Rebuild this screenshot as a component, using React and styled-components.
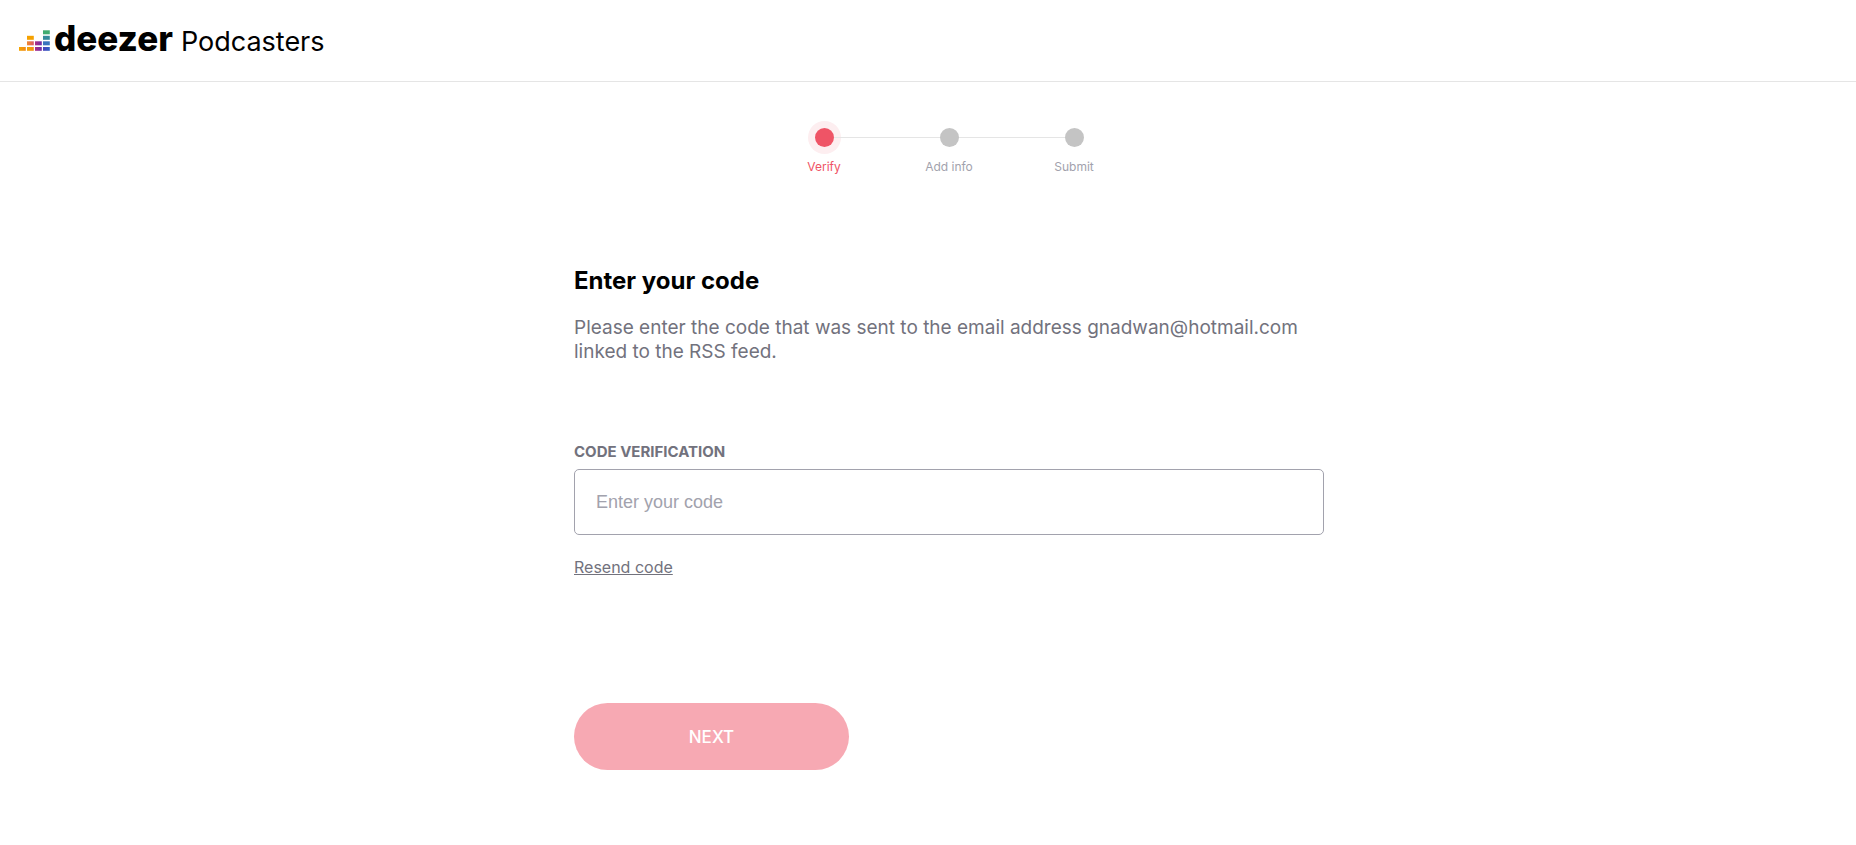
import React from "react";
import styled, { createGlobalStyle } from "styled-components";

const GlobalStyle = createGlobalStyle`
  * {
    box-sizing: border-box;
  }

  body {
    margin: 0;
    background-color: white;
    color: black;
    font-family: "Inter", "Liberation Sans", sans-serif;
  }
`;

const Header = styled.header`
  height: 82px;
  width: 100%;
  padding: 0 19px;
  border-bottom: 1px solid #e5e5e5;
`;

const Brand = styled.a`
  display: inline-flex;
  align-items: baseline;
  padding-top: 16px;
  color: black;
  text-decoration: none;
`;

const Equalizer = styled.svg`
  width: 32px;
  height: 21px;
  margin-right: 3px;
`;

const Wordmark = styled.span`
  font-size: 35px;
  font-weight: 800;
  line-height: 44px;
`;

const Product = styled.span`
  margin-left: 8px;
  font-size: 27px;
  line-height: 44px;
`;

const Main = styled.main`
  display: flex;
  flex-direction: column;
  align-items: center;
  padding: 38px 0 40px 42px;
`;

const Steps = styled.ol`
  display: flex;
  margin: 0;
  padding: 0;
  list-style: none;
`;

const Step = styled.li`
  display: flex;
  flex-direction: column;
  align-items: center;
  width: 125px;
  font-size: 12px;
  line-height: 16px;
  color: ${(props) => (props.$active ? "#ef5466" : "#a2a2ad")};
`;

const Track = styled.div`
  display: flex;
  align-items: center;
  width: 100%;
  height: 34px;
  margin-bottom: 5px;
`;

const Line = styled.span`
  flex: 1;
  height: 1px;
  background-color: ${(props) => (props.$hidden ? "transparent" : "#e5e5e5")};
`;

const Dot = styled.span`
  width: 19px;
  height: 19px;
  border-radius: 50%;
  background-color: ${(props) => (props.$active ? "#ef5466" : "#c4c4c4")};
  box-shadow: ${(props) => (props.$active ? "0 0 0 7px #fdeef0" : "none")};
`;

const Form = styled.form`
  display: flex;
  flex-direction: column;
  align-items: flex-start;
  width: 100%;
  max-width: 750px;
  margin-top: 90px;
`;

const Title = styled.h1`
  margin: 0;
  font-size: 24px;
  font-weight: 700;
  line-height: 32px;
`;

const Intro = styled.p`
  margin: 19px 0 0;
  font-size: 19px;
  line-height: 24px;
  color: #72727d;
`;

const Label = styled.label`
  margin-top: 78px;
  font-size: 15px;
  font-weight: 700;
  line-height: 20px;
  text-transform: uppercase;
  color: #72727d;
`;

const CodeInput = styled.input`
  width: 100%;
  height: 66px;
  margin-top: 7px;
  padding: 0 21px;
  border: 1px solid #a2a2ad;
  border-radius: 5px;
  font-family: "Liberation Sans", Arial, sans-serif;
  font-size: 18px;
  color: black;

  &::placeholder {
    color: #a2a2ad;
    opacity: 1;
  }
`;

const Resend = styled.a`
  margin-top: 20px;
  font-size: 16px;
  line-height: 24px;
  color: #72727d;
  text-decoration: underline;
`;

const NextButton = styled.button`
  width: 275px;
  height: 67px;
  margin-top: 124px;
  border: none;
  border-radius: 34px;
  background-color: #f7a9b3;
  font-family: inherit;
  font-size: 17px;
  font-weight: 500;
  color: white;
`;

const steps = ["Verify", "Add info", "Submit"];

const App = () => {
  return (
    <>
      <GlobalStyle />
      <Header>
        <Brand href="#">
          <Equalizer viewBox="0 0 32 21" aria-hidden="true">
            <defs>
              <linearGradient id="orange">
                <stop offset="0" stopColor="#f7a500" />
                <stop offset="1" stopColor="#ef8b1a" />
              </linearGradient>
              <linearGradient id="coral">
                <stop offset="0" stopColor="#f28a2c" />
                <stop offset="1" stopColor="#d9566b" />
              </linearGradient>
              <linearGradient id="purple">
                <stop offset="0" stopColor="#b02a86" />
                <stop offset="1" stopColor="#6b2fa8" />
              </linearGradient>
              <linearGradient id="blue">
                <stop offset="0" stopColor="#4a42b8" />
                <stop offset="1" stopColor="#2f62c8" />
              </linearGradient>
            </defs>
            <rect x="0" y="17" width="6.8" height="3.8" fill="url(#orange)" />
            <rect x="8" y="17" width="6.8" height="3.8" fill="url(#orange)" />
            <rect x="8" y="11.3" width="6.8" height="4" fill="url(#coral)" />
            <rect x="8" y="5.8" width="6.8" height="4" fill="#f5a100" />
            <rect x="16" y="17" width="6.8" height="3.8" fill="url(#purple)" />
            <rect x="16" y="11.3" width="6.8" height="4" fill="url(#purple)" />
            <rect x="24" y="17" width="6.8" height="3.8" fill="url(#blue)" />
            <rect x="24" y="11.3" width="6.8" height="4" fill="#3974bd" />
            <rect x="24" y="5.8" width="6.8" height="4" fill="#358a9c" />
            <rect x="24" y="0.3" width="6.8" height="4" fill="#40ab70" />
          </Equalizer>
          <Wordmark>deezer</Wordmark>
          <Product>Podcasters</Product>
        </Brand>
      </Header>
      <Main>
        <Steps>
          {steps.map((name, i) => (
            <Step key={name} $active={i === 0}>
              <Track>
                <Line $hidden={i === 0} />
                <Dot $active={i === 0} />
                <Line $hidden={i === steps.length - 1} />
              </Track>
              {name}
            </Step>
          ))}
        </Steps>
        <Form onSubmit={(e) => e.preventDefault()}>
          <Title>Enter your code</Title>
          <Intro>
            Please enter the code that was sent to the email address
            gnadwan@hotmail.com linked to the RSS feed.
          </Intro>
          <Label htmlFor="code">Code verification</Label>
          <CodeInput id="code" type="text" placeholder="Enter your code" />
          <Resend href="#">Resend code</Resend>
          <NextButton type="submit">NEXT</NextButton>
        </Form>
      </Main>
    </>
  );
};

export default App;
